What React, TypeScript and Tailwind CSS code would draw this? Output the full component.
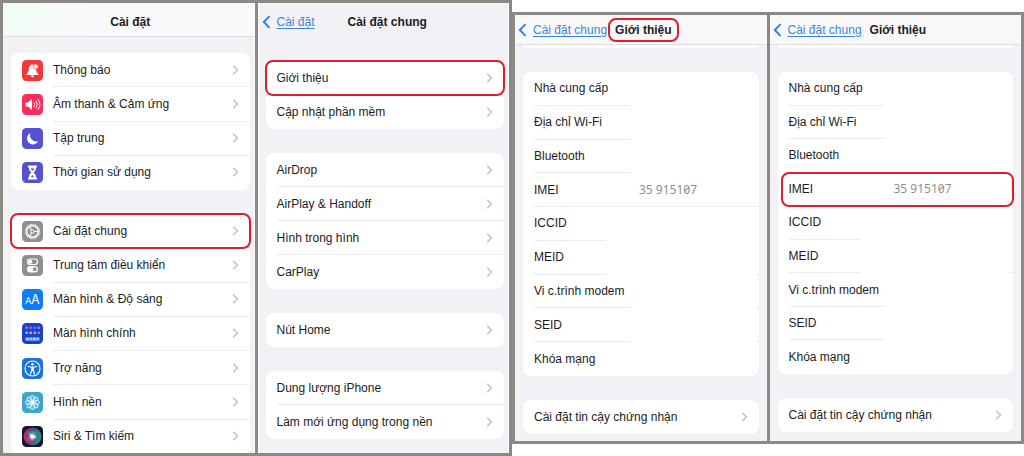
import React from 'react';
import clsx from 'clsx';

interface RowItem {
    label: string;
    icon?: React.ReactNode;
    value?: string;
    divider?: string;
    edgeDivider?: boolean;
    highlighted?: boolean;
}

interface CardProps {
    rows: RowItem[];
    className?: string;
}

interface IconTileProps {
    bg: string;
    children: React.ReactNode;
}

const IconTile: React.FC<IconTileProps> = ({ bg, children }) => (
    <svg viewBox="0 0 42 42" className="h-[21px] w-[21px] shrink-0" aria-hidden="true">
        <rect width="42" height="42" rx="9" fill={bg} />
        {children}
    </svg>
);

const ICONS = {
    bell: (
        <IconTile bg="#f4383a">
            <path d="M21 9c-5.500 0-7.500 4-7.500 10 0 5-1.500 7-4.500 9.500V30h24v-1.500c-3-2.500-4.500-4.500-4.500-9.500C28.500 13 26.500 9 21 9z" fill="#fff" />
            <path d="M17.500 31h7a3.500 3.500 0 0 1-7 0z" fill="#fff" />
            <circle cx="27.500" cy="13" r="5" fill="#fff" stroke="#f4383a" strokeWidth="1.400" />
        </IconTile>
    ),
    sound: (
        <IconTile bg="#f62d5d">
            <path d="M7 17h5l8-7v22l-8-7H7z" fill="#fff" />
            <path d="M24 17q3 4 0 8M28 14q5.500 7 0 14M32 11q8 10 0 20" fill="none" stroke="#fff" strokeWidth="2" strokeLinecap="round" />
        </IconTile>
    ),
    moon: (
        <IconTile bg="#5552cf">
            <path d="M17 10a12 12 0 1 0 15.500 16.500A12.500 12.500 0 0 1 17 10z" fill="#fff" />
        </IconTile>
    ),
    hourglass: (
        <IconTile bg="#5552cf">
            <path d="M12 7h18v4h-2c0 5-1.500 7.500-5 10 3.500 2.500 5 5 5 10h2v4H12v-4h2c0-5 1.500-7.500 5-10-3.500-2.500-5-5-5-10h-2z" fill="#fff" />
            <path d="M17.500 13h7c-.5 2-1.500 3-3.500 4.500-2-1.500-3-2.500-3.500-4.500zM18 30c.5-1.500 1.500-2.500 3-3.500 1.500 1 2.500 2 3 3.500z" fill="#5552cf" />
        </IconTile>
    ),
    gear: (
        <IconTile bg="#8f8f93">
            <circle cx="21" cy="21" r="14" fill="none" stroke="#fff" strokeWidth="3" strokeDasharray="2.400 2" />
            <circle cx="21" cy="21" r="11.500" fill="none" stroke="#fff" strokeWidth="2.600" />
            <circle cx="21" cy="21" r="3.500" fill="none" stroke="#fff" strokeWidth="2" />
            <path d="M24.500 21H32M19 18l-4-7M19 24l-4 7" stroke="#fff" strokeWidth="2.200" />
        </IconTile>
    ),
    toggles: (
        <IconTile bg="#8f8f93">
            <rect x="11" y="8" width="20" height="11" rx="5.500" fill="none" stroke="#fff" strokeWidth="2.400" />
            <circle cx="16.500" cy="13.500" r="4" fill="#fff" />
            <rect x="10" y="22" width="22" height="13" rx="6.500" fill="#fff" />
            <circle cx="25.500" cy="28.500" r="3.800" fill="#8f8f93" />
        </IconTile>
    ),
    textSize: (
        <IconTile bg="#0f7bf7">
            <text x="6" y="29" fontFamily="Inter, sans-serif" fontSize="19" fill="#fff">A</text>
            <text x="18" y="29" fontFamily="Inter, sans-serif" fontSize="25" fill="#fff">A</text>
        </IconTile>
    ),
    homeScreen: (
        <IconTile bg="#1f3fc6">
            <rect x="7" y="7" width="5" height="5" rx="1.500" fill="#5f9bff" />
            <rect x="15" y="7" width="5" height="5" rx="1.500" fill="#d0557c" />
            <rect x="23" y="7" width="5" height="5" rx="1.500" fill="#4f7bf0" />
            <rect x="31" y="7" width="5" height="5" rx="1.500" fill="#7f8df0" />
            <rect x="7" y="17" width="5" height="5" rx="1.500" fill="#86c4ff" />
            <rect x="15" y="17" width="5" height="5" rx="1.500" fill="#a0b8ff" />
            <rect x="23" y="17" width="5" height="5" rx="1.500" fill="#f0a35a" />
            <rect x="31" y="17" width="5" height="5" rx="1.500" fill="#e2707c" />
            <rect x="6" y="28" width="30" height="8" rx="3" fill="#4a86e8" />
            <rect x="8" y="29.500" width="5" height="5" rx="1.500" fill="#9fe0ff" />
            <rect x="15" y="29.500" width="5" height="5" rx="1.500" fill="#8fd0ff" />
            <rect x="22" y="29.500" width="5" height="5" rx="1.500" fill="#b5e4ff" />
            <rect x="29" y="29.500" width="5" height="5" rx="1.500" fill="#8fd0ff" />
        </IconTile>
    ),
    accessibility: (
        <IconTile bg="#1a72dd">
            <circle cx="21" cy="21" r="15" fill="none" stroke="#fff" strokeWidth="2.200" />
            <circle cx="21" cy="12.500" r="2.600" fill="#fff" />
            <path d="M12.500 17l6.500 1.500h4l6.500-1.500M21 18v7M19.500 18.500v6.500L17 32M22.500 18.500v6.500L25 32" fill="none" stroke="#fff" strokeWidth="2.400" strokeLinecap="round" />
        </IconTile>
    ),
    wallpaper: (
        <IconTile bg="#3ea4cd">
            {[0, 45, 90, 135, 180, 225, 270, 315].map((angle) => (
                <ellipse
                    key={angle}
                    cx="21"
                    cy="12.500"
                    rx="4"
                    ry="5.500"
                    fill="#8fcbe3"
                    fillOpacity="0.3"
                    stroke="#fff"
                    strokeWidth="1.700"
                    transform={`rotate(${angle} 21 21)`}
                />
            ))}
            <circle cx="21" cy="21" r="3.500" fill="#fff" />
        </IconTile>
    ),
    siri: (
        <IconTile bg="#15152a">
            <defs>
                <linearGradient id="siri-ring" x1="0" y1="0.3" x2="1" y2="0.5">
                    <stop offset="0" stopColor="#c02a62" />
                    <stop offset="0.45" stopColor="#4f4b80" />
                    <stop offset="1" stopColor="#279784" />
                </linearGradient>
                <radialGradient id="siri-glow">
                    <stop offset="0" stopColor="#ffffff" />
                    <stop offset="0.45" stopColor="#bcd6f0" stopOpacity="0.8" />
                    <stop offset="1" stopColor="#4a7bc8" stopOpacity="0" />
                </radialGradient>
            </defs>
            <circle cx="21" cy="21" r="18" fill="url(#siri-ring)" />
            <path d="M9 16c5-8 19-9 25 2-7-5-16-4-25-2z" fill="#2ab9a6" fillOpacity="0.6" />
            <path d="M7 23c7-3 13 0 17 9-7 3-14-1-17-9z" fill="#e43468" fillOpacity="0.7" />
            <circle cx="21" cy="21" r="10" fill="url(#siri-glow)" />
            <path d="M15 15l15 7-11 4z" fill="#fff" fillOpacity="0.7" />
        </IconTile>
    ),
};

const Chevron: React.FC = () => (
    <svg viewBox="0 0 7 12" className="h-3 w-[7px] shrink-0" aria-hidden="true">
        <path d="M1.200 1.800L5.400 6L1.200 10.200" fill="none" stroke="#c4c4c7" strokeWidth="1.600" />
    </svg>
);

const BackLink: React.FC<{ label: string }> = ({ label }) => (
    <a href="#back" className="flex shrink-0 items-center gap-1.5 text-xs text-[#3b86dc]">
        <svg viewBox="0 0 9 14" className="h-3.5 w-[9px]" aria-hidden="true">
            <path d="M7.500 1.200L1.800 7L7.500 12.800" fill="none" stroke="#2f7ceb" strokeWidth="1.900" />
        </svg>
        <span className="underline underline-offset-2">{label}</span>
    </a>
);

// Red outline drawn over the row it marks
const Highlight: React.FC<{ className: string }> = ({ className }) => (
    <span className={clsx('pointer-events-none absolute z-10 rounded-lg border-2 border-[#dc1f2e]', className)} />
);

const MenuCard: React.FC<CardProps> = ({ rows, className }) => (
    <ul className={clsx('grid auto-rows-fr rounded-lg bg-white', className)}>
        {rows.map((row, index) => (
            <li key={row.label} className="relative">
                <button type="button" className="flex h-full w-full items-center pl-[11px] text-left">
                    {row.icon && <span className="mr-[10px]">{row.icon}</span>}
                    <span
                        className={clsx(
                            'flex h-full flex-1 items-center justify-between border-b pr-[11px]',
                            index < rows.length - 1 ? 'border-[#ececee]' : 'border-transparent'
                        )}
                    >
                        {row.label}
                        <Chevron />
                    </span>
                </button>
                {row.highlighted && <Highlight className="-inset-px" />}
            </li>
        ))}
    </ul>
);

const InfoCard: React.FC<CardProps> = ({ rows, className }) => (
    <dl className={clsx('grid auto-rows-fr rounded-lg bg-white', className)}>
        {rows.map((row) => (
            <div key={row.label} className="relative flex flex-col pl-[11px]">
                <div className="flex flex-1 items-center">
                    <dt className="w-[105px]">{row.label}</dt>
                    {row.value && (
                        <dd className="font-['Noto_Sans',sans-serif] text-[#8f8f93] slashed-zero">{row.value}</dd>
                    )}
                </div>
                <div className="flex h-px justify-between">
                    <span className={clsx(row.divider && 'bg-[#ececee]', row.divider)} />
                    {row.edgeDivider && <span className="w-1 bg-[#ececee]" />}
                </div>
                {row.highlighted && <Highlight className="-top-px -right-px -bottom-px left-[3px]" />}
            </div>
        ))}
    </dl>
);

const settingsTop: RowItem[] = [
    { label: 'Thông báo', icon: ICONS.bell },
    { label: 'Âm thanh & Cảm ứng', icon: ICONS.sound },
    { label: 'Tập trung', icon: ICONS.moon },
    { label: 'Thời gian sử dụng', icon: ICONS.hourglass },
];

const settingsMain: RowItem[] = [
    { label: 'Cài đặt chung', icon: ICONS.gear, highlighted: true },
    { label: 'Trung tâm điều khiển', icon: ICONS.toggles },
    { label: 'Màn hình & Độ sáng', icon: ICONS.textSize },
    { label: 'Màn hình chính', icon: ICONS.homeScreen },
    { label: 'Trợ năng', icon: ICONS.accessibility },
    { label: 'Hình nền', icon: ICONS.wallpaper },
    { label: 'Siri & Tìm kiếm', icon: ICONS.siri },
];

const aboutRows: RowItem[] = [
    { label: 'Nhà cung cấp', divider: 'w-24' },
    { label: 'Địa chỉ Wi-Fi', divider: 'w-24' },
    { label: 'Bluetooth', divider: 'w-24' },
    { label: 'IMEI', value: '35 915107', divider: 'w-full' },
    { label: 'ICCID', divider: 'w-18' },
    { label: 'MEID', divider: 'w-18', edgeDivider: true },
    { label: 'Vi c.trình modem', divider: 'w-24', edgeDivider: true },
    { label: 'SEID', divider: 'w-24', edgeDivider: true },
    { label: 'Khóa mạng' },
];

const markedAboutRows: RowItem[] = aboutRows.map((row) => {
    if (row.label === 'IMEI') return { ...row, divider: undefined, highlighted: true };
    if (row.label === 'Bluetooth') return { ...row, divider: undefined };
    return { ...row, edgeDivider: row.label === 'MEID' };
});

const SettingsScreen: React.FC = () => (
    <section className="min-h-0 overflow-hidden border-r border-white bg-[#f1f1f6]">
        <header className="h-[34px] border-b border-[#dedee2] bg-linear-to-r from-[#f1fbf4] to-[#f9f9fa] to-40% pt-2.5">
            <h1 className="pl-1 text-center text-[12px] leading-[18px] font-semibold">Cài đặt</h1>
        </header>
        <div className="flex flex-col gap-6 pt-4 pr-1 pl-2">
            <MenuCard rows={settingsTop} className="h-[137px]" />
            <MenuCard rows={settingsMain} className="h-[240px]" />
        </div>
    </section>
);

const GeneralScreen: React.FC = () => (
    <section className="min-h-0 overflow-hidden border-x border-white bg-[#f1f1f6] pr-1 pl-[3px]">
        <header className="flex h-[38px] items-center">
            <BackLink label="Cài đặt" />
            <h1 className="pl-[33px] text-[12px] font-semibold">Cài đặt chung</h1>
        </header>
        <div className="flex flex-col gap-6 pt-5 pl-1">
            <MenuCard
                rows={[{ label: 'Giới thiệu', highlighted: true }, { label: 'Cập nhật phần mềm' }]}
                className="h-[68px]"
            />
            <MenuCard
                rows={[{ label: 'AirDrop' }, { label: 'AirPlay & Handoff' }, { label: 'Hình trong hình' }, { label: 'CarPlay' }]}
                className="h-[136px]"
            />
            <MenuCard rows={[{ label: 'Nút Home' }]} className="h-[34px]" />
            <MenuCard
                rows={[{ label: 'Dung lượng iPhone' }, { label: 'Làm mới ứng dụng trong nền' }]}
                className="h-[68px]"
            />
        </div>
    </section>
);

interface AboutScreenProps {
    rows: RowItem[];
    cardClassName: string;
    titleHighlighted?: boolean;
}

const AboutScreen: React.FC<AboutScreenProps> = ({ rows, cardClassName, titleHighlighted }) => (
    <section className="overflow-hidden bg-[#f1f1f6] pb-[7px]">
        <header className="flex h-[30px] items-center border-b border-[#dedee2] bg-[#f8f8f9] pl-[3px]">
            <BackLink label="Cài đặt chung" />
            <h1
                className={clsx(
                    'ml-px rounded-lg border-2 px-[5px] text-[12px] leading-5 font-semibold whitespace-nowrap',
                    titleHighlighted ? 'border-[#dc1f2e]' : 'border-transparent'
                )}
            >
                Giới thiệu
            </h1>
        </header>
        <div className="flex flex-col gap-6 px-2">
            <div className="h-[3px] rounded-b-lg bg-white" />
            <InfoCard rows={rows} className={cardClassName} />
            <MenuCard rows={[{ label: 'Cài đặt tin cậy chứng nhận' }]} className="h-[34px]" />
        </div>
    </section>
);

const App: React.FC = () => (
    <main className="grid grid-cols-2 items-start bg-white font-['Liberation_Sans',Arial,sans-serif] text-xs text-[#1c1c1e]">
        <div className="grid h-screen grid-cols-2 grid-rows-1 gap-[3px] bg-[#8b8984] p-[3px]">
            <SettingsScreen />
            <GeneralScreen />
        </div>
        <div className="mt-3 grid grid-cols-2 gap-[3px] bg-[#8b8984] p-[3px]">
            <AboutScreen rows={aboutRows} cardClassName="h-[304px]" titleHighlighted />
            <AboutScreen rows={markedAboutRows} cardClassName="h-[302px]" />
        </div>
    </main>
);

export default App;
